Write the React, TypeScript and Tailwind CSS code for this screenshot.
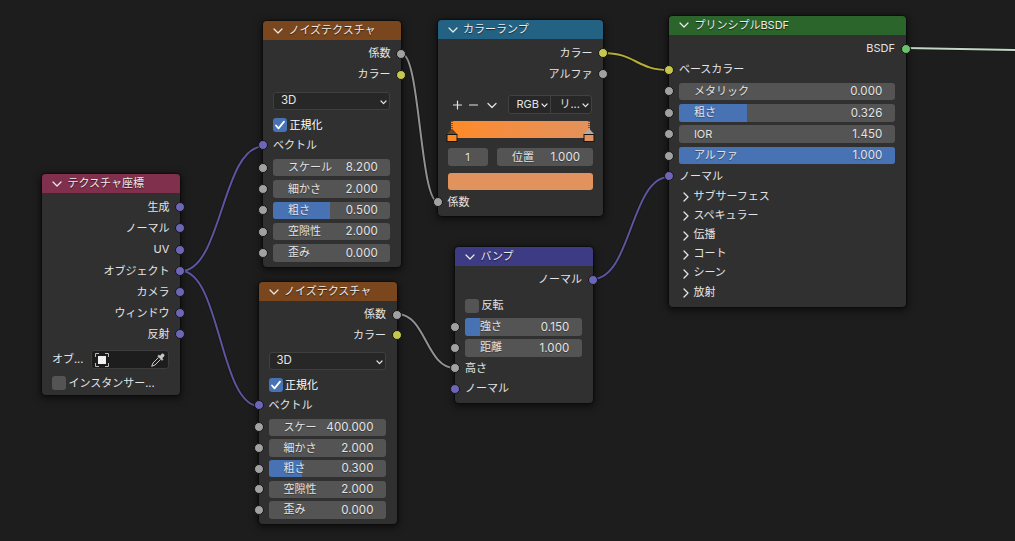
import React from 'react';

type SocketKind = 'gray' | 'yellow' | 'violet' | 'green';

const socketColor: Record<SocketKind, string> = {
  gray: 'bg-[#a1a1a1]',
  yellow: 'bg-[#c5c64d]',
  violet: 'bg-[#6c65b8]',
  green: 'bg-[#67c46c]',
};

function Socket({ kind, side }: { kind: SocketKind; side: 'in' | 'out' }) {
  const place = side === 'in' ? '-left-[5px]' : '-right-[5px]';
  return (
    <span
      className={`absolute top-1/2 size-[10px] -translate-y-1/2 rounded-full border border-[#151515] ${place} ${socketColor[kind]}`}
    />
  );
}

function ChevronDown({ className = '' }: { className?: string }) {
  return (
    <svg viewBox="0 0 10 6" className={className} fill="none" stroke="currentColor" strokeWidth="1.2" strokeLinecap="round" strokeLinejoin="round">
      <path d="M1 1l4 4 4-4" />
    </svg>
  );
}

function SmallChevron() {
  return (
    <svg viewBox="0 0 7 5" className="mt-[2px] h-[5px] w-[7px]" fill="none" stroke="currentColor" strokeWidth="1.2" strokeLinecap="round" strokeLinejoin="round">
      <path d="M1 1l2.500 2.600L6 1" />
    </svg>
  );
}

function Node({ className, header, title, children }: { className: string; header: string; title: string; children: React.ReactNode }) {
  return (
    <section className={`absolute flex flex-col rounded-[4px] bg-[#303030] shadow-[0_2px_7px_2px_rgba(0,0,0,0.5),0_0_1px_1px_rgba(0,0,0,0.35)] ${className}`}>
      <header className={`flex h-[19px] shrink-0 items-center gap-[5px] rounded-t-[4px] pl-[10px] text-[#ececec] [text-shadow:0_1px_1px_rgba(0,0,0,0.6)] ${header}`}>
        <ChevronDown className="h-[6px] w-[10px]" />
        <span>{title}</span>
      </header>
      {children}
    </section>
  );
}

type RowProps = { h?: string; input?: SocketKind; output?: SocketKind; children: React.ReactNode };

function Row({ h = 'h-[21.2px]', input, output, children }: RowProps) {
  return (
    <div className={`relative flex shrink-0 items-center pr-[11px] pl-[9.5px] ${h}`}>
      {input && <Socket kind={input} side="in" />}
      {children}
      {output && <Socket kind={output} side="out" />}
    </div>
  );
}

function Output({ label, kind, h }: { label: string; kind: SocketKind; h?: string }) {
  return (
    <Row h={h} output={kind}>
      <span className="ml-auto">{label}</span>
    </Row>
  );
}

function Input({ label, kind, h }: { label: string; kind: SocketKind; h?: string }) {
  return (
    <Row h={h} input={kind}>
      <span>{label}</span>
    </Row>
  );
}

function Slider({ label, value, fill = 0, h }: { label: string; value: string; fill?: number; h?: string }) {
  return (
    <Row h={h} input="gray">
      <div className="relative flex h-[17.5px] flex-1 items-center justify-between overflow-hidden rounded-[3px] bg-[#545454] pr-[12.5px] pl-[15px] [text-shadow:0_1px_1px_rgba(0,0,0,0.35)]">
        <span className="absolute inset-y-0 left-0 bg-[#4772b3]" style={{ width: `${fill * 100}%` }} />
        <span className="relative">{label}</span>
        <span className="relative top-[0.5px] text-[11.5px] tracking-[0.1px]">{value}</span>
      </div>
    </Row>
  );
}

function Check({ label, checked = false, h }: { label: string; checked?: boolean; h?: string }) {
  return (
    <Row h={h}>
      <span className={`mr-[2.5px] flex size-[14px] items-center justify-center rounded-[3px] ${checked ? 'bg-[#4772b3]' : 'bg-[#545454]'}`}>
        {checked && (
          <svg viewBox="0 0 12 12" className="size-[12px]" fill="none" stroke="#fff" strokeWidth="1.8" strokeLinecap="round" strokeLinejoin="round">
            <path d="M2 6.500l2.500 2.800L10 2.700" />
          </svg>
        )}
      </span>
      <span className={checked ? 'text-white' : ''}>{label}</span>
    </Row>
  );
}

function Dropdown({ label, h }: { label: string; h?: string }) {
  return (
    <Row h={h}>
      <div className="flex h-[18px] flex-1 items-center justify-between rounded-[3px] border border-[#3f3f3f] bg-[#272727] pr-[2px] pl-[7px]">
        <span className="text-[11.5px]">{label}</span>
        <SmallChevron />
      </div>
    </Row>
  );
}

function Panel({ label }: { label: string }) {
  return (
    <Row h="h-[19.2px]">
      <svg viewBox="0 0 6 10" className="mt-[2px] mr-[4.5px] ml-[4px] h-[10px] w-[6px]" fill="none" stroke="currentColor" strokeWidth="1.3" strokeLinecap="round" strokeLinejoin="round">
        <path d="M1 1l4 4-4 4" />
      </svg>
      <span>{label}</span>
    </Row>
  );
}

function Handle({ className, color, tip }: { className: string; color: string; tip: string }) {
  return (
    <svg viewBox="0 0 12 22" className={`absolute top-0 h-[22px] w-[12px] ${className}`}>
      <path d="M6 0v8" stroke="#1a1a1a" strokeWidth="1" strokeDasharray="1 1" />
      <path d="M6 7.500l5 5.500H1z" fill={tip} />
      <rect x="1" y="13.500" width="10" height="7" fill={color} stroke="#151515" />
    </svg>
  );
}

function Wires() {
  return (
    <svg className="absolute inset-0 h-[541px] w-[1015px]" viewBox="0 0 1015 541" fill="none">
      <g stroke="#121212" strokeWidth="3.6" opacity="0.7">
        <path d="M181 271C222 271 222 146.500 263 146.500" />
        <path d="M181 271C220 271 220 406 259 406" />
        <path d="M402 54C420 54 420 202 438 202" />
        <path d="M397 314C426 314 426 368 455 368" />
        <path d="M603 53C636 53 636 70 669 70" />
        <path d="M593 279C631 279 631 177 669 177" />
        <path d="M906 48L1015 50" />
      </g>
      <g strokeWidth="2">
        <path d="M181 271C222 271 222 146.500 263 146.500" stroke="#5d569f" />
        <path d="M181 271C220 271 220 406 259 406" stroke="#5d569f" />
        <path d="M402 54C420 54 420 202 438 202" stroke="#929292" />
        <path d="M397 314C426 314 426 368 455 368" stroke="#929292" />
        <path d="M603 53C636 53 636 70 669 70" stroke="#b5ae38" />
        <path d="M593 279C631 279 631 177 669 177" stroke="#5d569f" />
        <path d="M906 48L1015 50" stroke="#c3d8c4" />
      </g>
    </svg>
  );
}

function NoiseRows({ scaleLabel, scale, roughness, fill, h }: { scaleLabel: string; scale: string; roughness: string; fill: number; h: string }) {
  return (
    <>
      <Output label="係数" kind="gray" h={h} />
      <Output label="カラー" kind="yellow" h={h} />
      <Dropdown label="3D" h="h-[31px]" />
      <Check label="正規化" checked h="h-[17px]" />
      <Input label="ベクトル" kind="violet" h="h-[23.5px]" />
      <Slider label={scaleLabel} value={scale} h={h} />
      <Slider label="細かさ" value="2.000" h={h} />
      <Slider label="粗さ" value={roughness} fill={fill} h={h} />
      <Slider label="空隙性" value="2.000" h={h} />
      <Slider label="歪み" value="0.000" h={h} />
    </>
  );
}

export default function App() {
  return (
    <main className="relative h-[541px] w-[1015px] overflow-hidden bg-[#1d1d1d] font-['Inter','Noto_Sans_CJK_JP',sans-serif] text-[11px] leading-none whitespace-nowrap text-[#e4e4e4]">
      <Wires />

      <Node className="top-[174px] left-[42.400px] h-[221px] w-[138px]" header="bg-[#80304c] mb-[3.5px]" title="テクスチャ座標">
        <Output label="生成" kind="violet" />
        <Output label="ノーマル" kind="violet" />
        <Output label="UV" kind="violet" h="h-[21.6px]" />
        <Output label="オブジェクト" kind="violet" />
        <Output label="カメラ" kind="violet" />
        <Output label="ウィンドウ" kind="violet" h="h-[20.8px]" />
        <Output label="反射" kind="violet" />
        <Row h="h-[30px]">
          <span className="w-[39px]">オブ...</span>
          <div className="flex h-[19px] flex-1 items-center justify-between rounded-[3px] border border-[#3c3c3c] bg-[#1d1d1d] px-[3px]">
            <svg viewBox="0 0 14 14" className="size-[14px]" fill="none" stroke="#b8b8b8" strokeWidth="1">
              <path d="M.5 4V.5H4M10 .5h3.500V4M13.500 10v3.500H10M4 13.500H.5V10" />
              <rect x="3" y="3" width="8" height="8" fill="#f2f2f2" stroke="none" />
            </svg>
            <svg viewBox="0 0 14 14" className="size-[14px]" fill="none" stroke="#c8c8c8" strokeWidth="1" strokeLinejoin="round">
              <path d="M7.500 4.500L2 10l-1.300 3.300L4 12l5.500-5.500" />
              <path d="M6.700 3l1.200-1 1.300 1 1.500-2c1-1 3.300.5 2.300 2.300l-2 1.700 1 1.300-1 1.200z" fill="#c8c8c8" strokeWidth=".5" />
            </svg>
          </div>
        </Row>
        <Check label="インスタンサー..." h="h-[17px]" />
      </Node>

      <Node className="top-[21px] left-[263.400px] h-[246px] w-[138px]" header="bg-[#79461d] mb-[3px]" title="ノイズテクスチャ">
        <NoiseRows scaleLabel="スケール" scale="8.200" roughness="0.500" fill={0.485} h="h-[21.3px]" />
      </Node>

      <Node className="top-[282px] left-[259px] h-[242px] w-[138px]" header="bg-[#79461d] mb-[3.5px]" title="ノイズテクスチャ">
        <NoiseRows scaleLabel="スケー" scale="400.000" roughness="0.300" fill={0.285} h="h-[20.6px]" />
      </Node>

      <Node className="top-[20px] left-[438px] h-[196px] w-[165.400px]" header="bg-[#246283] mb-[3.5px]" title="カラーランプ">
        <Output label="カラー" kind="yellow" />
        <Output label="アルファ" kind="gray" />
        <Row h="h-[40px]">
          <div className="flex flex-1 items-center pl-[5px]">
            <svg viewBox="0 0 46 10" className="h-[10px] w-[46px]" fill="none" stroke="currentColor" strokeWidth="1.2" strokeLinecap="round" strokeLinejoin="round">
              <path d="M.5 5h8M4.500 1v8M16.500 5h8M35 3.500l4 4 4-4" />
            </svg>
          </div>
          <div className="flex h-[19px] w-[84px] rounded-[3px] border border-[#414141] bg-[#272727]">
            <div className="flex w-[42px] items-center justify-between border-r border-[#414141] pr-[2px] pl-[7px]">
              RGB
              <SmallChevron />
            </div>
            <div className="flex flex-1 items-center justify-between pr-[2px] pl-[8px]">
              リ...
              <SmallChevron />
            </div>
          </div>
        </Row>
        <div className="relative -mt-[4px] mr-[8px] ml-[8px] h-[22px] shrink-0">
          <div className="mx-[5px] h-[17px] bg-linear-to-r from-[#ff8a25] to-[#e2925c]" />
          <Handle className="left-0" color="#f98b26" tip="#70441f" />
          <Handle className="right-0" color="#e2925c" tip="#b5aaa1" />
        </div>
        <div className="mt-[5.5px] mr-[10.5px] ml-[9.5px] flex h-[18px] shrink-0 gap-[9px] [text-shadow:0_1px_1px_rgba(0,0,0,0.35)]">
          <div className="flex w-[40px] items-center justify-center rounded-[3px] bg-[#545454]">1</div>
          <div className="flex flex-1 items-center justify-between rounded-[3px] bg-[#545454] pr-[13px] pl-[15.5px]">
            <span>位置</span>
            <span className="text-[11.5px]">1.000</span>
          </div>
        </div>
        <div className="mt-[6.5px] mr-[10.5px] ml-[9.5px] h-[17.5px] shrink-0 rounded-[3px] bg-[#e2925c]" />
        <Input label="係数" kind="gray" h="h-[24px]" />
      </Node>

      <Node className="top-[247px] left-[455.400px] h-[156px] w-[137.5px]" header="bg-[#3c3b83] mb-[3px]" title="バンプ">
        <Output label="ノーマル" kind="violet" />
        <Row h="h-[5px]">{null}</Row>
        <Check label="反転" />
        <Slider label="強さ" value="0.150" fill={0.13} />
        <Slider label="距離" value="1.000" h="h-[20.5px]" />
        <Input label="高さ" kind="gray" h="h-[20.5px]" />
        <Input label="ノーマル" kind="violet" h="h-[20.8px]" />
      </Node>

      <Node className="top-[15.5px] left-[669.400px] h-[291px] w-[236.5px]" header="bg-[#2b652b] mb-[3.4px]" title="プリンシプルBSDF">
        <Output label="BSDF" kind="green" h="h-[21.4px]" />
        <Input label="ベースカラー" kind="yellow" h="h-[21.4px]" />
        <Slider label="メタリック" value="0.000" h="h-[21.4px]" />
        <Slider label="粗さ" value="0.326" fill={0.315} h="h-[21.4px]" />
        <Slider label="IOR" value="1.450" h="h-[21.4px]" />
        <Slider label="アルファ" value="1.000" fill={1} h="h-[21.4px]" />
        <Input label="ノーマル" kind="violet" h="h-[20.4px]" />
        <Panel label="サブサーフェス" />
        <Panel label="スペキュラー" />
        <Panel label="伝播" />
        <Panel label="コート" />
        <Panel label="シーン" />
        <Panel label="放射" />
      </Node>
    </main>
  );
}
